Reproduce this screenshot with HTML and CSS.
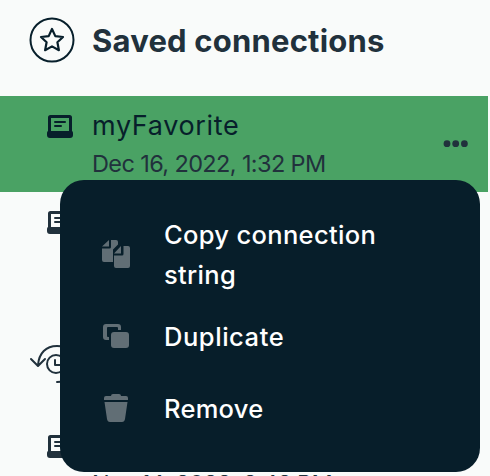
FILE: index.html
```html
<!DOCTYPE html>
<html lang="en">
<head>
<meta charset="utf-8">
<title>Saved connections</title>
<link rel="stylesheet" href="styles.css">
</head>
<body>
<svg class="symbols" aria-hidden="true">
  <symbol id="laptop" viewBox="0 0 28 26">
    <path fill="currentColor" fill-rule="evenodd" d="M4.500 1h19Q26 1 26 3.500V17q1 .4 1 2v2q0 3-3 3H4q-3 0-3-3v-2q0-1.600 1-2V3.500Q2 1 4.500 1ZM5 4v13h18V4Z"/>
    <path stroke="currentColor" stroke-width="2" stroke-linecap="round" d="M9 8h10M9 12h6"/>
  </symbol>
</svg>
<aside class="sidebar">
  <header class="section-title">
    <svg class="star" viewBox="0 0 46 46" fill="none" stroke="#071f2b">
      <circle cx="23" cy="23" r="21.500" stroke-width="2"/>
      <path stroke-width="2.200" stroke-linejoin="round" d="M23 12l3.300 7.100 7.700.9-5.600 5.300 1.500 7.900-6.900-3.800-6.900 3.800 1.500-7.900L12 20l7.700-.9Z"/>
    </svg>
    <h2>Saved connections</h2>
  </header>
  <article class="connection active">
    <svg class="laptop"><use href="#laptop"/></svg>
    <div class="details"><div class="name"><span>myFavorite</span></div><div class="date"><span>Dec 16, 2022, 1:32 PM</span></div></div>
    <svg class="dots" viewBox="0 0 26 8" fill="#21313c"><circle cx="5" cy="3.700" r="3.400"/><circle cx="13.700" cy="3.700" r="3.400"/><circle cx="22.400" cy="3.700" r="3.400"/></svg>
    <div class="menu">
      <div class="item">
        <svg viewBox="0 0 32 32" fill="currentColor"><path d="M9 2v6.500H2ZM11 2h5q2 0 2 2v2.500l-5 5V24H4q-2 0-2-2V10.500h7.500Q11 10.500 11 9ZM21 8v7.500h-7ZM23.500 8H28q2 0 2 2v18q0 2-2 2H16q-2 0-2-2V17.500h8q1.500 0 1.500-1.500Z"/></svg>
        <span class="label copy">Copy connection<br>string</span>
      </div>
      <div class="item">
        <svg viewBox="0 0 32 32" fill="currentColor"><path d="M6 4h12q3 0 3 3v3h-3V8q0-1-1-1H8q-1 0-1 1v8q0 1 1 1h1v3H6q-3 0-3-3V7q0-3 3-3Z"/><rect x="11" y="12" width="18" height="16" rx="3"/></svg>
        <span class="label duplicate">Duplicate</span>
      </div>
      <div class="item">
        <svg viewBox="0 0 32 32" fill="currentColor"><path d="M11 4q0-2 2-2h6q2 0 2 2h5q2 0 2 2v2H4V6q0-2 2-2ZM4.500 10h23L25 27q-.5 3-3 3H10q-2.500 0-3-3Z"/></svg>
        <span class="label remove">Remove</span>
      </div>
    </div>
  </article>
  <article class="connection">
    <svg class="laptop"><use href="#laptop"/></svg>
  </article>
  <header class="section-title recents">
    <svg class="history" viewBox="0 0 50 46" fill="none" stroke="#21313c" stroke-width="2" stroke-linecap="round" stroke-linejoin="round">
      <path d="M9 24C10 12 17 5 28 5c11 0 18 8 18 18s-7 18-18 18M2 18l7 7 7-7"/>
      <circle cx="27" cy="23" r="9"/><path d="M26 19v5h5"/>
    </svg>
  </header>
  <article class="connection">
    <svg class="laptop"><use href="#laptop"/></svg>
    <div class="details"><div class="name"></div><div class="date"><span>Nov 14, 2022, 2:42 PM</span></div></div>
  </article>
</aside>
</body>
</html>
```
FILE: styles.css
```css
* { box-sizing: border-box; }
body {
  margin: 0;
  height: 476px;
  overflow: hidden;
  background: #f9fbfa;
  color: #21313c;
  font-family: Inter, "Liberation Sans", sans-serif;
}
.symbols { display: none; }
.sidebar { width: 488px; height: 476px; overflow: hidden; }
.section-title {
  display: flex;
  align-items: flex-start;
  height: 96px;
  padding: 17px 0 0 29px;
}
.star { width: 46px; height: 46px; flex: none; }
h2 {
  margin: 3px 0 0 17px;
  font-size: 31px;
  line-height: 42px;
  font-weight: 700;
  letter-spacing: .2px;
  white-space: nowrap;
}
.connection {
  position: relative;
  display: flex;
  height: 96px;
  padding: 18px 20px 0 46px;
}
.active { background: #4aa264; color: #071f2b; }
.laptop { width: 28px; height: 26px; flex: none; }
.details { margin-left: 18px; flex: 1; white-space: nowrap; }
.name { height: 38px; font-size: 27px; line-height: 23px; letter-spacing: .65px; }
.date { color: #21313c; font-size: 23.500px; line-height: 24px; letter-spacing: -.62px; }
.dots { width: 26px; height: 8px; margin-top: 26px; flex: none; }
.recents { margin-top: 32px; padding: 21px 0 0 29px; }
.history { width: 50px; height: 46px; }
.menu {
  position: absolute;
  z-index: 1;
  left: 60px;
  top: 84px;
  width: 420px;
  height: 292px;
  padding: 32px 40px;
  border-radius: 24px;
  background: #071e2a;
  color: #fff;
}
.item { display: flex; align-items: center; height: 72px; }
.item:first-child { height: 84px; margin-bottom: 4px; }
.item svg { width: 32px; height: 32px; color: #616e75; flex: none; }
.label {
  margin-left: 32px;
  padding-top: 2px;
  font-size: 25.500px;
  line-height: 40px;
  font-weight: 500;
  white-space: nowrap;
}
.copy { letter-spacing: .33px; }
.duplicate { letter-spacing: .55px; }
.remove { letter-spacing: .25px; }
```
